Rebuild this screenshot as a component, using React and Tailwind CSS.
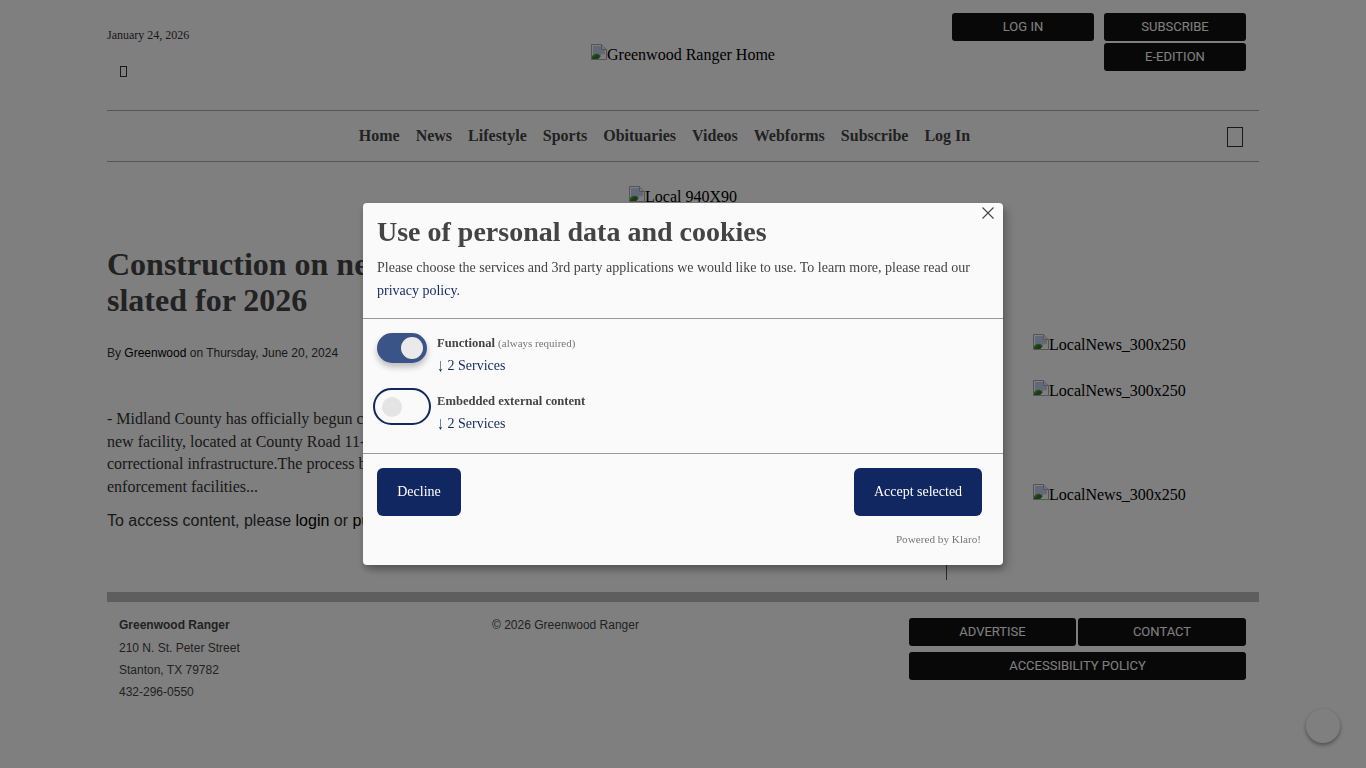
const serif = { fontFamily: '"Liberation Serif", serif' };

function BrokenImage() {
  return (
    <svg width="16" height="16" viewBox="0 0 16 16" className="shrink-0">
      <path d="M0.5 0.5H10.5L15.5 5.5V15.5H0.5Z" fill="#fff" stroke="#a9a9a9" />
      <path d="M10.5 0.5V5.5H15.5" fill="#e8e8e8" stroke="#a9a9a9" />
      <path d="M2 2H10V6H14V10L2 12Z" fill="#c3d0ee" />
      <path d="M1 15V12C4 9 7 9 10 12L7 15Z" fill="#4f9a3a" />
      <path d="M1 15L6 10.5L9 13L7 15Z" fill="#2f7d2b" />
    </svg>
  );
}

function AltImage({ alt, className = "" }) {
  return (
    <span className={"inline-flex items-start text-base leading-[18px] text-black " + className} style={serif}>
      <BrokenImage />
      <span className="mt-[2px]">{alt}</span>
    </span>
  );
}

function BlackButton({ children, className = "" }) {
  return (
    <a className={"flex h-7 items-center justify-center rounded-[3px] bg-[#111] font-['Roboto',sans-serif] text-[13px] text-white " + className}>
      {children}
    </a>
  );
}

function ToggleRow({ name, note, on }) {
  return (
    <div className="flex h-[58px] items-start">
      <div className="flex w-[60px] shrink-0 items-start">
        {on ? (
          <span className="flex h-[30px] w-[50px] items-center justify-end rounded-full bg-[#3b5488] pr-[4px] shadow-[0_4px_6px_rgba(0,0,0,0.25)]">
            <span className="h-[22px] w-[22px] rounded-full bg-[#eaeaea]" />
          </span>
        ) : (
          <span className="-ml-[4px] -mt-[3px] flex h-[37px] w-[58px] items-center rounded-full border-2 border-[#12285f] pl-[7px]">
            <span className="h-[20px] w-[20px] rounded-full bg-[#e4e4e4]" />
          </span>
        )}
      </div>
      <div>
        <p className="text-[12.6px] leading-[20px] text-[#444]">
          <b>{name}</b>
          {note && <span className="ml-[3px] text-[11px] text-[#777]">{note}</span>}
        </p>
        <p className="mt-[3px] text-[14px] leading-[20px] text-[#12285f]">
          <span className="inline-block scale-y-[1.3]">↓</span> 2 Services
        </p>
      </div>
    </div>
  );
}

function CookieModal() {
  return (
    <div className="fixed inset-0 z-10 flex items-start justify-center bg-black/50 pt-[203px]" style={serif}>
      <div className="relative h-[362px] w-[640px] rounded bg-[#fafafa] shadow-[0_4px_6px_rgba(0,0,0,0.2),5px_5px_10px_rgba(0,0,0,0.19)]">
        <svg width="12" height="12" viewBox="0 0 12 12" className="absolute right-[9px] top-[4px]">
          <path d="M0.5 0.5L11.5 11.5M11.5 0.5L0.5 11.5" stroke="#444" strokeWidth="1.1" fill="none" />
        </svg>
        <div className="h-[116px] border-b border-[#999] px-[14px] pt-[11px]">
          <h1 className="text-[28px] font-bold leading-[36px] text-[#444]">Use of personal data and cookies</h1>
          <p className="mt-[6px] text-[14px] leading-[23px] text-[#444]">
            Please choose the services and 3rd party applications we would like to use. To learn more, please read our{" "}
            <a className="text-[#12285f]">privacy policy</a>.
          </p>
        </div>
        <div className="h-[135px] border-b border-[#999] px-[14px] pt-[14px]">
          <ToggleRow name="Functional" note="(always required)" on />
          <ToggleRow name="Embedded external content" />
        </div>
        <div className="px-[14px] pt-[14px]">
          <div className="flex items-center justify-between pr-[7px]">
            <button className="h-[48px] w-[84px] rounded-[6px] bg-[#112761] pb-[2px] text-[14px] text-white">Decline</button>
            <button className="h-[48px] w-[128px] rounded-[6px] bg-[#112761] pb-[2px] text-[14px] text-white">Accept selected</button>
          </div>
          <p className="mt-[16px] pr-[8px] text-right text-[11.2px] leading-[14px] text-[#777]">Powered by Klaro!</p>
        </div>
      </div>
    </div>
  );
}

const navItems = ["Home", "News", "Lifestyle", "Sports", "Obituaries", "Videos", "Webforms", "Subscribe", "Log In"];

export default function App() {
  return (
    <div className="relative h-[768px] overflow-hidden bg-white font-['Liberation_Sans',sans-serif]">
      <div className="mx-auto w-[1152px]">
        {/* Top header */}
        <header className="grid h-[111px] grid-cols-3 border-b border-[#aaa]">
          <div className="pt-[28px]" style={serif}>
            <p className="text-[12px] leading-[14px] text-[#333]">January 24, 2026</p>
            <span className="ml-[13px] mt-[24px] block h-[11px] w-[7px] border border-[#333]" />
          </div>
          <div className="flex justify-center pt-[44px]">
            <AltImage alt="Greenwood Ranger Home" />
          </div>
          <div className="flex justify-end pr-[13px] pt-[13px]">
            <div className="grid h-[58px] w-[294px] grid-cols-2 content-start gap-x-[10px] gap-y-[2px]">
              <BlackButton>LOG IN</BlackButton>
              <BlackButton>SUBSCRIBE</BlackButton>
              <BlackButton className="col-start-2">E-EDITION</BlackButton>
            </div>
          </div>
        </header>

        {/* Main nav */}
        <nav className="relative flex h-[51px] items-center justify-center border-b border-[#aaa] pr-[37px]" style={serif}>
          <div className="flex gap-[16px] pb-[1px] text-base font-bold text-[#444]">
            {navItems.map((item) => (
              <a key={item}>{item}</a>
            ))}
          </div>
          <span className="absolute right-[16px] top-[16px] h-[20px] w-[16px] border border-[#333]" />
        </nav>

        <div className="flex h-[50px] justify-center pt-[24px]">
          <AltImage alt="Local 940X90" className="h-[18px]" />
        </div>

        {/* Article and sidebar */}
        <div className="flex h-[368px]">
          <main className="w-[839px] pt-[34px] pr-[20px]">
            <h2 className="text-[32px] font-bold leading-[36px] text-[#444]" style={serif}>
              Construction on new Midland County detention center
              <br />
              slated for 2026
            </h2>
            <p className="mt-[26px] text-[12px] leading-[18px] text-[#333]">
              By <span className="text-black">Greenwood</span> on Thursday, June 20, 2024
            </p>
            <div className="mt-[46px] text-base leading-[22.5px] text-[#333]" style={serif}>
              - Midland County has officially begun construction on its new jail and detention center. The
              <br />
              new facility, located at County Road 11-40, is expected to open in 2026 and modernize the county's
              <br />
              correctional infrastructure.The process began years ago as officials studied the state of local law
              <br />
              enforcement facilities...
            </div>
            <p className="mt-[12px] text-base leading-[22px] text-[#333]">
              To access content, please <a className="text-black">login</a> or <a className="text-black">purchase a subscription</a>.
            </p>
          </main>
          <aside className="flex-1 border-l border-[#555] pl-[86px]">
            <div className="pt-[121px]">
              <AltImage alt="LocalNews_300x250" />
            </div>
            <div className="pt-[22px]">
              <AltImage alt="LocalNews_300x250" />
            </div>
            <div className="pt-[80px]">
              <AltImage alt="LocalNews_300x250" />
            </div>
          </aside>
        </div>

        {/* Footer */}
        <footer className="mt-[12px]">
          <div className="h-[10px] bg-[#bcbcbc]" />
          <div className="flex items-start pt-[16px] text-[12px] text-[#444]">
            <div className="w-[385px] pl-[12px] leading-[22px]">
              <p className="-mt-[4px] mb-[1px] font-bold">Greenwood Ranger</p>
              <p>210 N. St. Peter Street</p>
              <p>Stanton, TX 79782</p>
              <p>432-296-0550</p>
            </div>
            <p className="-mt-[4px] leading-[22px]">© 2026 Greenwood Ranger</p>
            <div className="ml-auto mr-[13px] grid w-[337px] grid-cols-[167px_168px] content-start gap-x-[2px] gap-y-[6px]">
              <BlackButton>ADVERTISE</BlackButton>
              <BlackButton>CONTACT</BlackButton>
              <BlackButton className="col-span-2">ACCESSIBILITY POLICY</BlackButton>
            </div>
          </div>
        </footer>
      </div>

      <span className="absolute bottom-[25px] right-[26px] h-[34px] w-[34px] rounded-full bg-white shadow-[0_2px_4px_rgba(0,0,0,0.4)]" />
      <CookieModal />
    </div>
  );
}
